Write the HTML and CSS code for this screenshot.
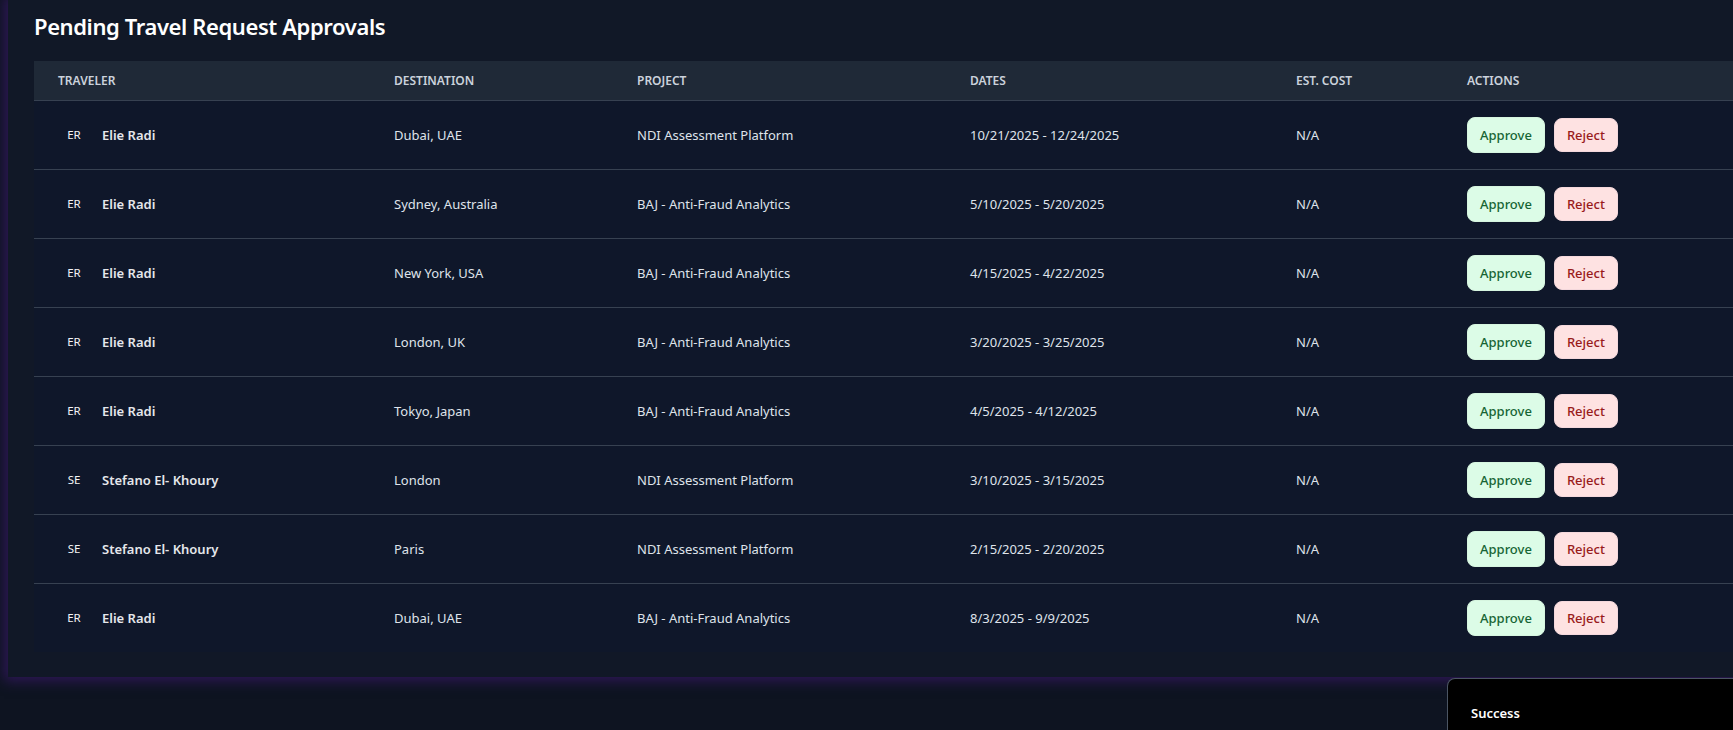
FILE: index.html
```html
<!DOCTYPE html>
<html lang="en">
<head>
<meta charset="utf-8">
<title>Pending Travel Request Approvals</title>
<link rel="stylesheet" href="styles.css">
</head>
<body>
<div class="page">
  <section class="card">
    <h2 class="title">Pending Travel Request Approvals</h2>
    <table class="approvals">
      <colgroup>
        <col class="c-traveler"><col class="c-dest"><col class="c-project"><col class="c-dates"><col class="c-cost"><col class="c-actions">
      </colgroup>
      <thead>
        <tr><th>Traveler</th><th>Destination</th><th>Project</th><th>Dates</th><th>Est. Cost</th><th>Actions</th></tr>
      </thead>
      <tbody>
        <tr><td><div class="traveler"><span class="avatar">ER</span><span class="name">Elie Radi</span></div></td><td>Dubai, UAE</td><td>NDI Assessment Platform</td><td>10/21/2025 - 12/24/2025</td><td class="cost">N/A</td><td><div class="actions"><button class="btn approve">Approve</button><button class="btn reject">Reject</button></div></td></tr>
        <tr><td><div class="traveler"><span class="avatar">ER</span><span class="name">Elie Radi</span></div></td><td>Sydney, Australia</td><td>BAJ - Anti-Fraud Analytics</td><td>5/10/2025 - 5/20/2025</td><td class="cost">N/A</td><td><div class="actions"><button class="btn approve">Approve</button><button class="btn reject">Reject</button></div></td></tr>
        <tr><td><div class="traveler"><span class="avatar">ER</span><span class="name">Elie Radi</span></div></td><td>New York, USA</td><td>BAJ - Anti-Fraud Analytics</td><td>4/15/2025 - 4/22/2025</td><td class="cost">N/A</td><td><div class="actions"><button class="btn approve">Approve</button><button class="btn reject">Reject</button></div></td></tr>
        <tr><td><div class="traveler"><span class="avatar">ER</span><span class="name">Elie Radi</span></div></td><td>London, UK</td><td>BAJ - Anti-Fraud Analytics</td><td>3/20/2025 - 3/25/2025</td><td class="cost">N/A</td><td><div class="actions"><button class="btn approve">Approve</button><button class="btn reject">Reject</button></div></td></tr>
        <tr><td><div class="traveler"><span class="avatar">ER</span><span class="name">Elie Radi</span></div></td><td>Tokyo, Japan</td><td>BAJ - Anti-Fraud Analytics</td><td>4/5/2025 - 4/12/2025</td><td class="cost">N/A</td><td><div class="actions"><button class="btn approve">Approve</button><button class="btn reject">Reject</button></div></td></tr>
        <tr><td><div class="traveler"><span class="avatar">SE</span><span class="name">Stefano El- Khoury</span></div></td><td>London</td><td>NDI Assessment Platform</td><td>3/10/2025 - 3/15/2025</td><td class="cost">N/A</td><td><div class="actions"><button class="btn approve">Approve</button><button class="btn reject">Reject</button></div></td></tr>
        <tr><td><div class="traveler"><span class="avatar">SE</span><span class="name">Stefano El- Khoury</span></div></td><td>Paris</td><td>NDI Assessment Platform</td><td>2/15/2025 - 2/20/2025</td><td class="cost">N/A</td><td><div class="actions"><button class="btn approve">Approve</button><button class="btn reject">Reject</button></div></td></tr>
        <tr><td><div class="traveler"><span class="avatar">ER</span><span class="name">Elie Radi</span></div></td><td>Dubai, UAE</td><td>BAJ - Anti-Fraud Analytics</td><td>8/3/2025 - 9/9/2025</td><td class="cost">N/A</td><td><div class="actions"><button class="btn approve">Approve</button><button class="btn reject">Reject</button></div></td></tr>
      </tbody>
    </table>
  </section>
</div>
<div class="toast" role="status">
  <div class="toast-title">Success</div>
</div>
</body>
</html>
```
FILE: styles.css
```css
* { box-sizing: border-box; }
html, body {
  margin: 0;
  padding: 0;
  overflow: hidden;
  height: 100%;
}
body {
  background: #0e1421;
  font-family: "Noto Sans", "Open Sans", sans-serif;
  color: #e5e7eb;
}
.page {
  padding-left: 8px;
  width: 1800px;
}
.card {
  background: #111827;
  padding: 10px 0 25px 26px;
  box-shadow: 0 0 12px 4px rgba(56, 24, 104, 0.75);
}
.title {
  margin: 0 0 19px 0;
  font-size: 22px;
  line-height: 32px;
  font-weight: 600;
  color: #ffffff;
  letter-spacing: -0.4px;
}
.approvals {
  border-collapse: collapse;
  table-layout: fixed;
  width: 1766px;
  background: #0f172a;
}
.c-traveler { width: 336px; }
.c-dest { width: 243px; }
.c-project { width: 333px; }
.c-dates { width: 326px; }
.c-cost { width: 171px; }
.c-actions { width: 357px; }
.approvals thead tr {
  background: #1f2937;
  border-bottom: 1px solid #374151;
}
.approvals th {
  text-align: left;
  padding: 12px 24px 11px;
  font-size: 12px;
  line-height: 16px;
  font-weight: 600;
  text-transform: uppercase;
  letter-spacing: 0;
  color: #cbd2dc;
}
.approvals tbody tr {
  border-bottom: 1px solid #374151;
}
.approvals tbody tr:last-child { border-bottom: none; }
.approvals td {
  padding: 16px 24px;
  height: 68px;
  font-size: 13px;
  line-height: 20px;
  color: #dfe3ea;
  vertical-align: middle;
  white-space: nowrap;
}
.traveler {
  display: flex;
  align-items: center;
  gap: 12px;
}
.avatar {
  width: 32px;
  height: 32px;
  border-radius: 50%;
  display: flex;
  align-items: center;
  justify-content: center;
  font-size: 11.5px;
  font-weight: 400;
  color: #f3f4f6;
}
.name {
  font-weight: 600;
  color: #e5e7eb;
}
.cost { color: #e5e7eb; }
.actions {
  display: flex;
  align-items: center;
  gap: 9px;
  height: 36px;
}
.btn {
  font-family: inherit;
  font-size: 13px;
  line-height: 20px;
  font-weight: 500;
  border-radius: 8px;
  cursor: pointer;
}
.approve {
  background: #dcfce7;
  color: #166534;
  border: 1px solid #d6f5df;
  padding: 7px 12px;
}
.reject {
  background: #fee2e2;
  color: #991b1b;
  border: 1px solid #f4d8dc;
  padding: 6px 12px;
}
.toast {
  position: absolute;
  left: 1447px;
  top: 678px;
  width: 356px;
  height: 52px;
  background: #000000;
  border: 1px solid #4b5563;
  border-bottom: none;
  border-radius: 8px 8px 0 0;
  padding: 24px 23px 0;
}
.toast-title {
  font-size: 13px;
  line-height: 20px;
  font-weight: 600;
  color: #ffffff;
}
```
